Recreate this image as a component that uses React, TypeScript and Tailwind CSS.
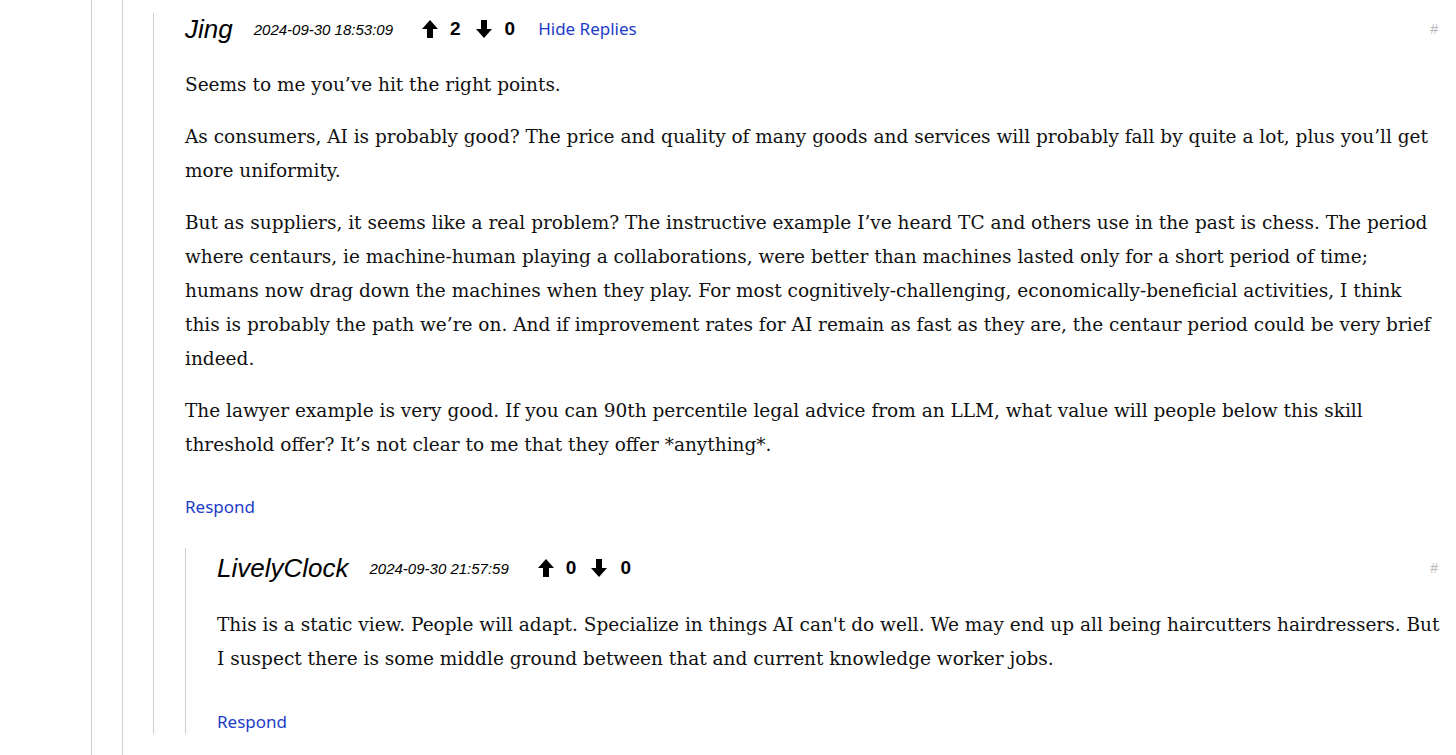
import React from "react";

const LINK = "text-[#1c3cc9]";

const ArrowUp = () => (
  <svg width="16" height="18" viewBox="0 0 16 18" className="block">
    <polygon points="8,0 16,9 11,9 11,18 5,18 5,9 0,9" fill="#000" />
  </svg>
);

const ArrowDown = () => (
  <svg width="16" height="18" viewBox="0 0 16 18" className="block">
    <polygon points="8,18 16,9 11,9 11,0 5,0 5,9 0,9" fill="#000" />
  </svg>
);

type HeaderProps = {
  user: string;
  date: string;
  up: number;
  down: number;
  hideReplies?: boolean;
};

const CommentHeader = ({ user, date, up, down, hideReplies }: HeaderProps) => (
  <div className="flex h-[32px] items-center">
    <span className="font-['Liberation_Sans',sans-serif] text-[26px] italic text-black">
      {user}
    </span>
    <span className="ml-[21px] mt-[3px] font-['Liberation_Sans',sans-serif] text-[15px] italic text-black">
      {date}
    </span>
    <div className="ml-[29px] flex items-center font-['Liberation_Sans',sans-serif] text-[19px] font-bold text-black">
      <ArrowUp />
      <span className="ml-[12px]">{up}</span>
      <span className="ml-[15px]">
        <ArrowDown />
      </span>
      <span className="ml-[13px]">{down}</span>
    </div>
    {hideReplies && (
      <a className={`ml-[23px] font-['Noto_Sans',sans-serif] text-[17px] ${LINK}`}>
        Hide Replies
      </a>
    )}
    <span className="ml-auto mr-[18px] font-['Liberation_Sans',sans-serif] text-[14px] text-[#b8b8b8]">
      #
    </span>
  </div>
);

const Body = ({ paragraphs }: { paragraphs: string[] }) => (
  <div className="flex flex-col gap-[18px] pr-[15px] font-['DejaVu_Serif',serif] text-[18.5px] leading-[34px] text-[#111]">
    {paragraphs.map((p, i) => (
      <p key={i}>{p}</p>
    ))}
  </div>
);

const Respond = ({ className }: { className?: string }) => (
  <div className={`h-[24px] font-['Noto_Sans',sans-serif] text-[17px] leading-[24px] ${LINK} ${className ?? ""}`}>
    Respond
  </div>
);

export default function App() {
  return (
    <div className="flex min-h-screen bg-white">
      <div className="ml-[91px] flex border-l border-[#cfcfcf] pl-[30px]">
        <div className="flex w-full border-l border-[#cfcfcf] pl-[30px]">
          <div className="mt-[13px] w-[1303px] self-start border-l border-[#cfcfcf] pl-[31px]">
            <CommentHeader
              user="Jing"
              date="2024-09-30 18:53:09"
              up={2}
              down={0}
              hideReplies
            />
            <div className="mt-[23px]">
              <Body
                paragraphs={[
                  "Seems to me you’ve hit the right points.",
                  "As consumers, AI is probably good? The price and quality of many goods and services will probably fall by quite a lot, plus you’ll get more uniformity.",
                  "But as suppliers, it seems like a real problem? The instructive example I’ve heard TC and others use in the past is chess. The period where centaurs, ie machine-human playing a collaborations, were better than machines lasted only for a short period of time; humans now drag down the machines when they play. For most cognitively-challenging, economically-beneficial activities, I think this is probably the path we’re on. And if improvement rates for AI remain as fast as they are, the centaur period could be very brief indeed.",
                  "The lawyer example is very good. If you can 90th percentile legal advice from an LLM, what value will people below this skill threshold offer? It’s not clear to me that they offer *anything*.",
                ]}
              />
            </div>
            <Respond className="mt-[33px]" />

            <div className="mt-[29px] border-l border-[#cfcfcf] pl-[31px] pt-[4px]">
              <CommentHeader
                user="LivelyClock"
                date="2024-09-30 21:57:59"
                up={0}
                down={0}
              />
              <div className="mt-[24px]">
                <Body
                  paragraphs={[
                    "This is a static view. People will adapt. Specialize in things AI can't do well. We may end up all being haircutters hairdressers. But I suspect there is some middle ground between that and current knowledge worker jobs.",
                  ]}
                />
              </div>
              <Respond className="mt-[34px] pb-[1px]" />
            </div>
          </div>
        </div>
      </div>
    </div>
  );
}
